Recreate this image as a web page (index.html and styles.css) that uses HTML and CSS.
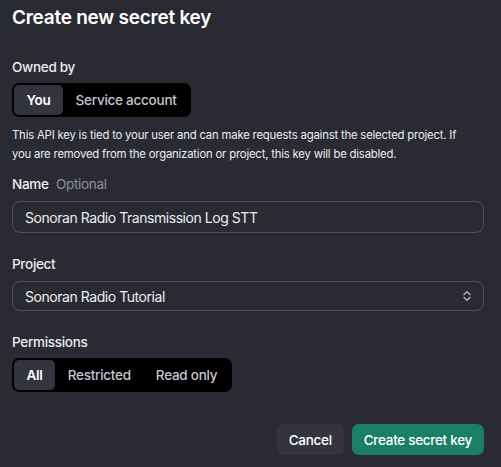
FILE: index.html
```html
<!DOCTYPE html>
<html>
<head>
<meta charset="utf-8">
<link rel="stylesheet" href="styles.css">
</head>
<body>
<div class="dialog">
  <h1 class="title">Create new secret key</h1>
  <div class="label mt-owned">Owned by</div>
  <div class="seg">
    <div class="seg-item active">You</div>
    <div class="seg-item">Service account</div>
  </div>
  <p class="desc">This API key is tied to your user and can make requests against the selected project. If you are removed from the organization or project, this key will be disabled.</p>
  <div class="label mt-name">Name <span class="optional">Optional</span></div>
  <div class="input">Sonoran Radio Transmission Log STT</div>
  <div class="label mt-field">Project</div>
  <div class="select">
    <span>Sonoran Radio Tutorial</span>
    <svg class="chev" width="10" height="12" viewBox="0 0 10 12" fill="none" stroke="#b4b4c0" stroke-width="1.4" stroke-linecap="round" stroke-linejoin="round"><path d="M2 4.5 5 1.8 8 4.5"/><path d="M2 7.5 5 10.2 8 7.5"/></svg>
  </div>
  <div class="label mt-field">Permissions</div>
  <div class="seg">
    <div class="seg-item active">All</div>
    <div class="seg-item">Restricted</div>
    <div class="seg-item">Read only</div>
  </div>
  <div class="actions">
    <button class="btn btn-cancel">Cancel</button>
    <button class="btn btn-primary">Create secret key</button>
  </div>
</div>
</body>
</html>
```
FILE: styles.css
```css
html, body {
  margin: 0;
  padding: 0;
  background: #2a2b32;
}
body {
  font-family: Inter, "Noto Sans", "Liberation Sans", sans-serif;
  color: #ececf1;
}
.dialog {
  padding: 4px 17px 0 12px;
}
.title {
  margin: 0;
  font-size: 19px;
  line-height: 28px;
  font-weight: 600;
  letter-spacing: -0.25px;
  color: #ffffff;
}
.label {
  font-size: 13.5px;
  line-height: 20px;
  font-weight: 500;
  letter-spacing: -0.3px;
  color: #ececf1;
}
.mt-owned { margin-top: 25px; }
.mt-name { margin-top: 10px; }
.mt-field { margin-top: 21px; }
.optional {
  font-weight: 400;
  color: #8e8ea0;
  margin-left: 4px;
}
.seg {
  display: inline-flex;
  margin-top: 6px;
  padding: 2px;
  background: #000000;
  border-radius: 7px;
}
.seg-item {
  height: 30px;
  line-height: 30px;
  padding: 0 12.5px;
  font-size: 13.5px;
  font-weight: 500;
  letter-spacing: -0.25px;
  color: #c5c5d2;
  border-radius: 5px;
  white-space: nowrap;
}
.seg-item.active {
  background: #33343d;
  color: #ffffff;
  font-weight: 600;
}
.desc {
  margin: 9px 0 0;
  max-width: 460px;
  font-size: 11.35px;
  line-height: 19px;
  letter-spacing: -0.2px;
  color: #ececf1;
}
.input, .select {
  margin-top: 7px;
  box-sizing: border-box;
  border: 1px solid #4e4f5c;
  border-radius: 8px;
  font-size: 14px;
  letter-spacing: -0.45px;
  color: #ececf1;
  display: flex;
  align-items: center;
  padding: 0 12px;
}
.input { height: 32px; }
.select {
  height: 30px;
  justify-content: space-between;
  padding-right: 11px;
}
.chev { display: block; }
.actions {
  margin-top: 32px;
  display: flex;
  justify-content: flex-end;
  gap: 8px;
}
.btn {
  height: 31px;
  border: none;
  border-radius: 7px;
  font-family: inherit;
  font-size: 13.5px;
  font-weight: 500;
  letter-spacing: -0.3px;
  color: #ffffff;
  padding: 0 12px;
  white-space: nowrap;
}
.btn-cancel { background: #33343d; }
.btn-primary { background: #1a7f64; }
```
